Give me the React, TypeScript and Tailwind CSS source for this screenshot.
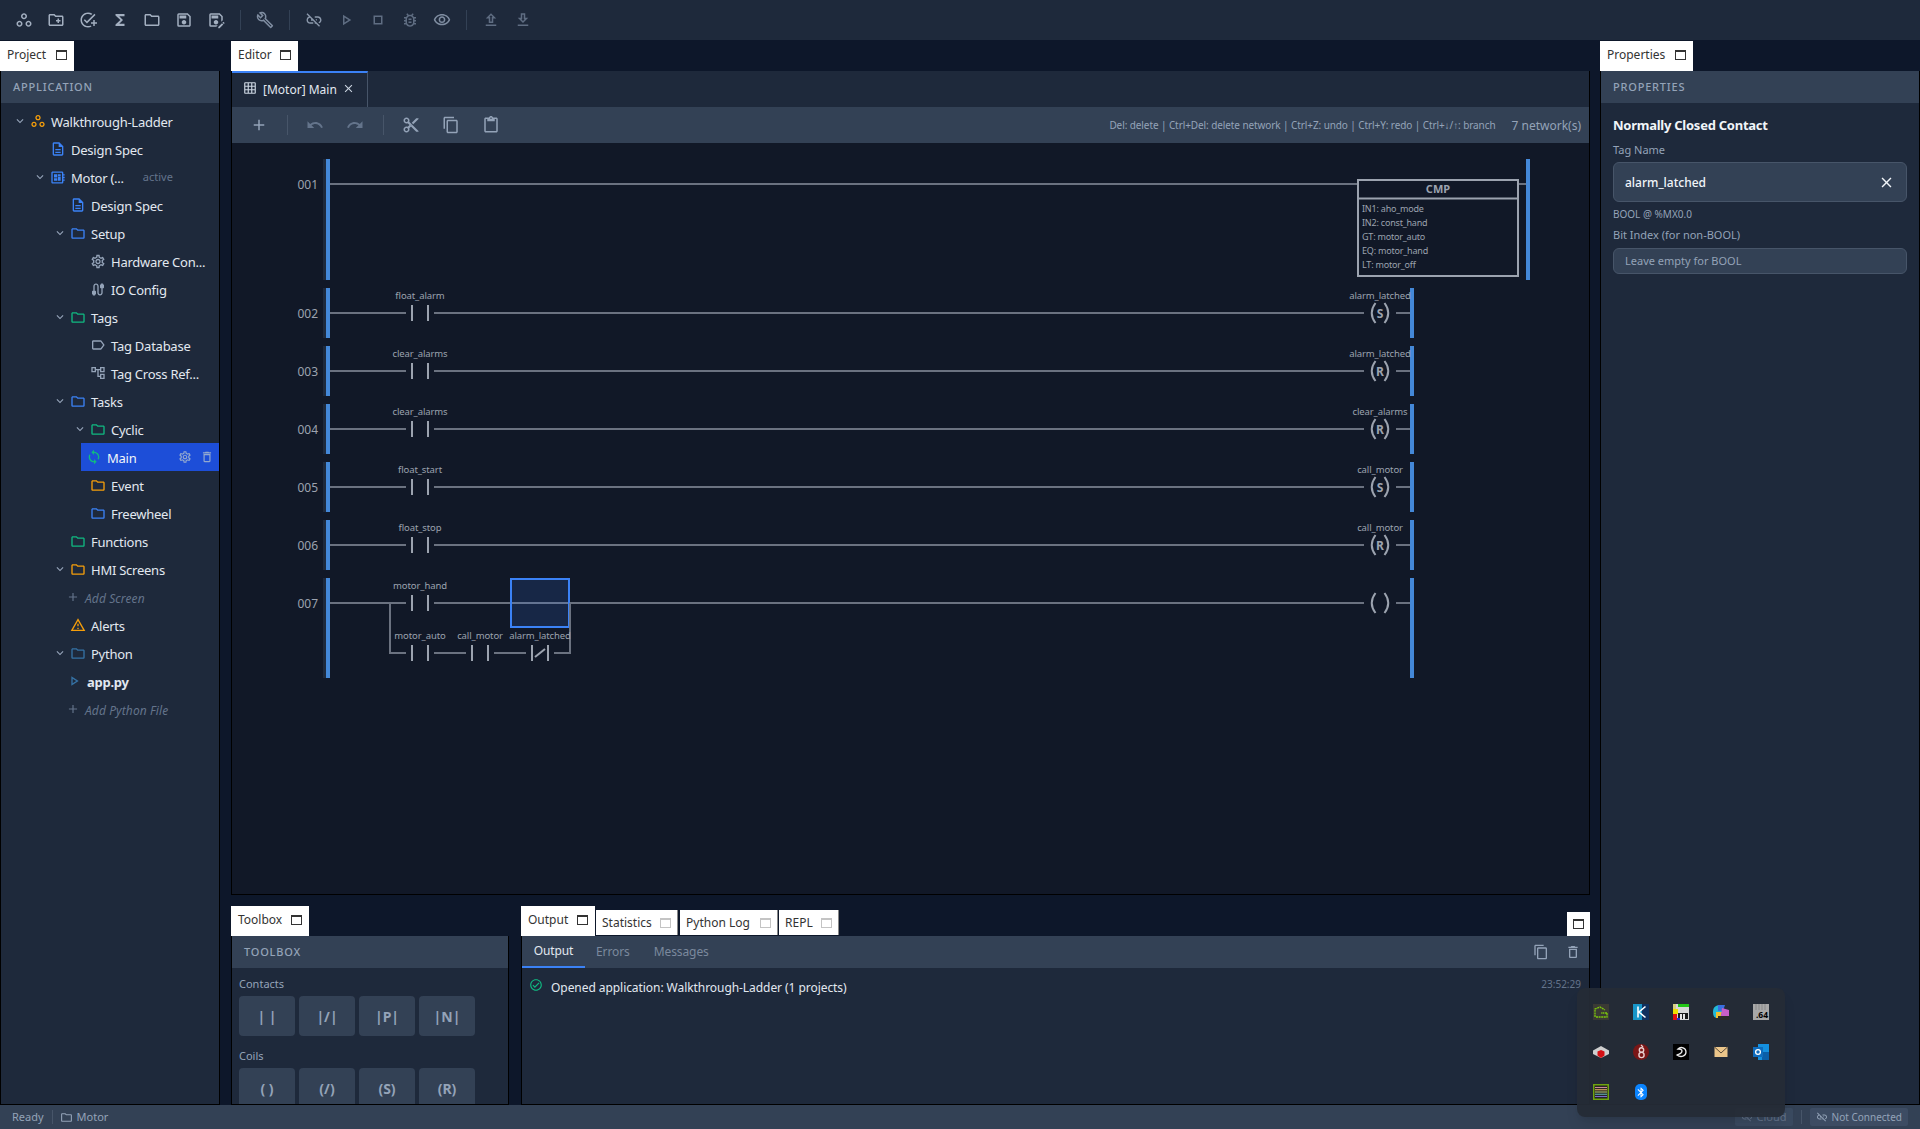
import type { ReactNode } from "react";
import {
  MdAdd,
  MdBluetooth,
  MdClose,
  MdExpandMore,
  MdFunctions,
  MdGridOn,
  MdLinkOff,
  MdOutlineAccountTree,
  MdOutlineAddTask,
  MdOutlineBugReport,
  MdOutlineBuild,
  MdOutlineCable,
  MdOutlineCheckCircle,
  MdOutlineContentCopy,
  MdOutlineContentCut,
  MdOutlineContentPaste,
  MdOutlineCreateNewFolder,
  MdOutlineDelete,
  MdOutlineDescription,
  MdOutlineDeveloperBoard,
  MdOutlineDownload,
  MdOutlineFolder,
  MdOutlineLabel,
  MdOutlinePlayArrow,
  MdOutlineSave,
  MdOutlineSaveAs,
  MdOutlineSettings,
  MdOutlineStop,
  MdOutlineSync,
  MdOutlineUpload,
  MdOutlineVisibility,
  MdOutlineWarningAmber,
  MdOutlineWorkspaces,
  MdRedo,
  MdUndo,
} from "react-icons/md";

const BLUE = "#3b82f6";
const GREEN = "#10b981";
const AMBER = "#f59e0b";
const GRAY = "#94a3b8";
const WIRE = "#6b7280";
const INK = "#9ca3af";
const RAIL = "#4488d8";

function MaxBox({ dim }: { dim?: boolean }) {
  return <span className={`block h-[10px] w-[11px] shrink-0 border border-t-2 ${dim ? "border-[#c4c4c4]" : "border-[#333333]"}`} />;
}

function DockTab({ label, className }: { label: string; className: string }) {
  return (
    <div className={`flex h-[30px] items-center justify-between bg-white pb-[2px] pl-[7px] pr-[7px] text-[12px] text-[#333333] ${className}`}>
      <span>{label}</span>
      <MaxBox />
    </div>
  );
}

function InactiveTab({ label, className }: { label: string; className: string }) {
  return (
    <div className={`mt-1 flex h-[25px] items-center justify-between border-r border-[#888888] bg-white pl-[6px] pr-[6px] text-[12px] text-[#333333] ${className}`}>
      <span>{label}</span>
      <MaxBox dim />
    </div>
  );
}

function PanelHeader({ title }: { title: string }) {
  return (
    <div className="flex h-[32px] shrink-0 items-center bg-[#334155] pl-[12px] text-[11px] font-medium tracking-[0.8px] text-[#94a3b8]">
      {title}
    </div>
  );
}

function TopBar() {
  const on = "text-[#a3afc0]";
  const off = "text-[#5f6d82]";
  const Btn = ({ children }: { children: ReactNode }) => <span className="flex h-[32px] w-[32px] items-center justify-center">{children}</span>;
  const Sep = () => <span className="mx-[8px] h-[20px] w-px bg-[#334155]" />;
  return (
    <div className="flex h-[40px] shrink-0 items-center bg-[#1e293b] pl-[8px]">
      <div className={`flex items-center ${on}`}>
        <Btn><MdOutlineWorkspaces size={18} /></Btn>
        <Btn><MdOutlineCreateNewFolder size={18} /></Btn>
        <Btn><MdOutlineAddTask size={18} /></Btn>
        <Btn><MdFunctions size={18} /></Btn>
        <Btn><MdOutlineFolder size={18} /></Btn>
        <Btn><MdOutlineSave size={18} /></Btn>
        <Btn><MdOutlineSaveAs size={18} /></Btn>
      </div>
      <Sep />
      <div className="flex items-center text-[#7f8da1]">
        <Btn><MdOutlineBuild size={18} /></Btn>
      </div>
      <Sep />
      <div className={`flex items-center ${off}`}>
        <Btn><span className="text-[#8b98ab]"><MdLinkOff size={18} /></span></Btn>
        <Btn><MdOutlinePlayArrow size={18} /></Btn>
        <Btn><MdOutlineStop size={18} /></Btn>
        <Btn><MdOutlineBugReport size={18} /></Btn>
        <Btn><span className="text-[#7f8da1]"><MdOutlineVisibility size={18} /></span></Btn>
      </div>
      <Sep />
      <div className={`flex items-center ${off}`}>
        <Btn><MdOutlineUpload size={18} /></Btn>
        <Btn><MdOutlineDownload size={18} /></Btn>
      </div>
    </div>
  );
}

type TreeRow = {
  label: string;
  pad: string;
  icon: ReactNode;
  chevron?: boolean;
  note?: string;
  bold?: boolean;
};

const folder = (color: string) => <MdOutlineFolder size={17} color={color} />;

const rows: TreeRow[] = [
  { label: "Walkthrough-Ladder", pad: "pl-[12px]", chevron: true, icon: <MdOutlineWorkspaces size={16} color={AMBER} /> },
  { label: "Design Spec", pad: "pl-[32px]", icon: <MdOutlineDescription size={16} color={BLUE} /> },
  { label: "Motor (...", pad: "pl-[32px]", chevron: true, note: "active", icon: <MdOutlineDeveloperBoard size={17} color={BLUE} /> },
  { label: "Design Spec", pad: "pl-[52px]", icon: <MdOutlineDescription size={16} color={BLUE} /> },
  { label: "Setup", pad: "pl-[52px]", chevron: true, icon: folder(BLUE) },
  { label: "Hardware Con...", pad: "pl-[72px]", icon: <MdOutlineSettings size={17} color={GRAY} /> },
  { label: "IO Config", pad: "pl-[72px]", icon: <MdOutlineCable size={17} color={GRAY} /> },
  { label: "Tags", pad: "pl-[52px]", chevron: true, icon: folder(GREEN) },
  { label: "Tag Database", pad: "pl-[72px]", icon: <MdOutlineLabel size={16} color={GRAY} /> },
  { label: "Tag Cross Ref...", pad: "pl-[72px]", icon: <MdOutlineAccountTree size={16} color={GRAY} /> },
  { label: "Tasks", pad: "pl-[52px]", chevron: true, icon: folder(BLUE) },
  { label: "Cyclic", pad: "pl-[72px]", chevron: true, icon: folder(GREEN) },
];

const rowsAfterMain: TreeRow[] = [
  { label: "Event", pad: "pl-[72px]", icon: folder(AMBER) },
  { label: "Freewheel", pad: "pl-[72px]", icon: folder(BLUE) },
  { label: "Functions", pad: "pl-[52px]", icon: folder(GREEN) },
  { label: "HMI Screens", pad: "pl-[52px]", chevron: true, icon: folder(AMBER) },
];

function Row({ row }: { row: TreeRow }) {
  return (
    <div className={`flex h-[28px] items-center text-[13px] tracking-[-0.25px] text-[#e2e8f0] ${row.pad}`}>
      <span className="flex w-[14px] shrink-0 justify-center">
        {row.chevron && <MdExpandMore size={14} color={GRAY} />}
      </span>
      <span className="ml-[3px] flex w-[16px] shrink-0 justify-center">{row.icon}</span>
      <span className="ml-[5px] translate-y-[2px] whitespace-nowrap">{row.label}</span>
      {row.note && <span className="ml-[19px] text-[11px] tracking-normal text-[#64748b]">{row.note}</span>}
    </div>
  );
}

function AddRow({ label }: { label: string }) {
  return (
    <div className="flex h-[28px] items-center pl-[65px] text-[12px] italic tracking-[0.1px] text-[#64748b]">
      <MdAdd size={14} />
      <span className="ml-[5px] translate-y-[2px]">{label}</span>
    </div>
  );
}

function ProjectPanel() {
  return (
    <div className="flex w-[220px] shrink-0 flex-col">
      <DockTab label="Project" className="w-[74px]" />
      <div className="flex min-h-0 flex-1 flex-col border border-t-0 border-black bg-[#1e293b]">
        <PanelHeader title="APPLICATION" />
        <div className="pt-[4px]">
          {rows.map((row, i) => (
            <Row key={i} row={row} />
          ))}
          <div className="ml-[80px] flex h-[28px] items-center bg-[#1d4ed8] pl-[5px] text-[13px] tracking-[-0.25px] text-[#f1f5f9]">
            <MdOutlineSync size={16} color={GREEN} className="shrink-0" />
            <span className="ml-[5px] flex-1 translate-y-[2px]">Main</span>
            <MdOutlineSettings size={14} color="#93a9cf" className="mr-[8px]" />
            <MdOutlineDelete size={14} color="#93a9cf" className="mr-[5px]" />
          </div>
          {rowsAfterMain.map((row, i) => (
            <Row key={i} row={row} />
          ))}
          <AddRow label="Add Screen" />
          <Row row={{ label: "Alerts", pad: "pl-[52px]", icon: <MdOutlineWarningAmber size={18} color={AMBER} /> }} />
          <Row row={{ label: "Python", pad: "pl-[52px]", chevron: true, icon: folder("#3572a5") }} />
          <div className="flex h-[28px] items-center pl-[65px] text-[13px] font-bold tracking-[-0.25px] text-[#e2e8f0]">
            <MdOutlinePlayArrow size={16} color="#3572a5" className="shrink-0" />
            <span className="ml-[5px] translate-y-[2px]">app.py</span>
          </div>
          <AddRow label="Add Python File" />
        </div>
      </div>
    </div>
  );
}

function Contact({ x, y, tag, closed }: { x: number; y: number; tag: string; closed?: boolean }) {
  return (
    <g>
      <text x={x} y={y - 14} textAnchor="middle" fontSize={9.5} letterSpacing={-0.1} fill={INK}>{tag}</text>
      <line x1={x - 8} x2={x - 8} y1={y - 8} y2={y + 8} stroke={INK} strokeWidth={2} />
      <line x1={x + 8} x2={x + 8} y1={y - 8} y2={y + 8} stroke={INK} strokeWidth={2} />
      {closed && <line x1={x - 5} x2={x + 5} y1={y + 4} y2={y - 4} stroke={INK} strokeWidth={2} />}
    </g>
  );
}

function Coil({ y, tag, letter }: { y: number; tag?: string; letter?: string }) {
  return (
    <g>
      {tag && <text x={1380} y={y - 14} textAnchor="middle" fontSize={9.5} letterSpacing={-0.1} fill={INK}>{tag}</text>}
      <path d={`M1375.5 ${y - 10} Q1368 ${y} 1375.5 ${y + 10}`} fill="none" stroke={INK} strokeWidth={2} />
      <path d={`M1384.5 ${y - 10} Q1392 ${y} 1384.5 ${y + 10}`} fill="none" stroke={INK} strokeWidth={2} />
      {letter && <text x={1380} y={y + 4.5} textAnchor="middle" fontSize={12} fontWeight={700} fill={INK}>{letter}</text>}
    </g>
  );
}

function Wire({ x1, x2, y }: { x1: number; x2: number; y: number }) {
  return <line x1={x1} x2={x2} y1={y} y2={y} stroke={WIRE} strokeWidth={2} />;
}

function Network({ num, h, rungY, endX, children }: { num: string; h: number; rungY: number; endX: number; children: ReactNode }) {
  return (
    <svg width={1357} height={h} viewBox={`232 0 1357 ${h}`} className="block shrink-0">
      <text x={318} y={rungY + 5} textAnchor="end" fontSize={12} fill={INK}>{num}</text>
      <rect x={323} y={0} width={3} height={h} fill="#1e293b" />
      <rect x={326} y={0} width={4} height={h} fill={RAIL} />
      <rect x={endX} y={0} width={4} height={h} fill={RAIL} />
      {children}
    </svg>
  );
}

const simpleNets = [
  { num: "002", tag: "float_alarm", coil: "alarm_latched", letter: "S" },
  { num: "003", tag: "clear_alarms", coil: "alarm_latched", letter: "R" },
  { num: "004", tag: "clear_alarms", coil: "clear_alarms", letter: "R" },
  { num: "005", tag: "float_start", coil: "call_motor", letter: "S" },
  { num: "006", tag: "float_stop", coil: "call_motor", letter: "R" },
];

function Ladder() {
  return (
    <div className="flex min-h-0 flex-1 flex-col gap-[8px] overflow-hidden bg-[#111827] pt-[16px]">
      <Network num="001" h={121} rungY={25} endX={1526}>
        <Wire x1={330} x2={1358} y={25} />
        <Wire x1={1518} x2={1526} y={25} />
        <rect x={1358} y={21} width={160} height={96} fill="none" stroke={INK} strokeWidth={2} />
        <line x1={1358} x2={1518} y1={39.5} y2={39.5} stroke={INK} strokeWidth={2} />
        <text x={1438} y={34} textAnchor="middle" fontSize={11} fontWeight={700} fill={INK}>CMP</text>
        {["IN1: aho_mode", "IN2: const_hand", "GT: motor_auto", "EQ: motor_hand", "LT: motor_off"].map((t, i) => (
          <text key={t} x={1362} y={53 + i * 14} fontSize={9} letterSpacing={-0.2} fill={INK}>{t}</text>
        ))}
      </Network>
      {simpleNets.map((n) => (
        <Network key={n.num} num={n.num} h={50} rungY={25} endX={1410}>
          <Wire x1={330} x2={406} y={25} />
          <Wire x1={434} x2={1364} y={25} />
          <Wire x1={1396} x2={1410} y={25} />
          <Contact x={420} y={25} tag={n.tag} />
          <Coil y={25} tag={n.coil} letter={n.letter} />
        </Network>
      ))}
      <Network num="007" h={100} rungY={25} endX={1410}>
        <Wire x1={330} x2={406} y={25} />
        <Wire x1={434} x2={1364} y={25} />
        <Wire x1={1396} x2={1410} y={25} />
        <Contact x={420} y={25} tag="motor_hand" />
        <rect x={511} y={1} width={58} height={48} fill={BLUE} fillOpacity={0.15} stroke={BLUE} strokeWidth={2} />
        <path d="M390 25V75H406" fill="none" stroke={WIRE} strokeWidth={2} />
        <Wire x1={434} x2={466} y={75} />
        <Wire x1={494} x2={526} y={75} />
        <path d="M554 75H570V25" fill="none" stroke={WIRE} strokeWidth={2} />
        <Contact x={420} y={75} tag="motor_auto" />
        <Contact x={480} y={75} tag="call_motor" />
        <Contact x={540} y={75} tag="alarm_latched" closed />
        <Coil y={25} />
      </Network>
    </div>
  );
}

function EditorPanel() {
  const Sep = () => <span className="block h-[20px] w-px shrink-0 bg-[#475569]" />;
  return (
    <div className="flex min-h-0 flex-1 flex-col">
      <DockTab label="Editor" className="w-[67px]" />
      <div className="flex min-h-0 flex-1 flex-col border border-t-0 border-black">
        <div className="flex h-[36px] shrink-0 bg-[#1e293b]">
          <div className="flex w-[136px] items-center border-r border-t-2 border-r-[#475569] border-t-[#3b82f6] text-[12px] text-[#e2e8f0]">
            <MdGridOn size={14} className="ml-[11px] -translate-y-[2px] text-[#cbd5e1]" />
            <span className="ml-[6px]">[Motor] Main</span>
            <MdClose size={13} className="ml-[5px] -translate-y-[2px] text-[#cbd5e1]" />
          </div>
        </div>
        <div className="flex h-[36px] shrink-0 items-center bg-[#334155] text-[#64748b]">
          <MdAdd size={18} className="ml-[18px] text-[#94a3b8]" />
          <span className="ml-[19px]"><Sep /></span>
          <MdUndo size={18} className="ml-[18px]" />
          <MdRedo size={18} className="ml-[22px]" />
          <span className="ml-[19px]"><Sep /></span>
          <MdOutlineContentCut size={18} className="ml-[18px] text-[#94a3b8]" />
          <MdOutlineContentCopy size={18} className="ml-[22px] text-[#94a3b8]" />
          <MdOutlineContentPaste size={18} className="ml-[22px] text-[#94a3b8]" />
          <span className="ml-auto text-[10px] tracking-[-0.09px] text-[#94a3b8]">
            Del: delete | Ctrl+Del: delete network | Ctrl+Z: undo | Ctrl+Y: redo | Ctrl+↓/↑: branch
          </span>
          <span className="ml-[16px] mr-[8px] translate-y-px text-[12px] text-[#94a3b8]">7 network(s)</span>
        </div>
        <Ladder />
      </div>
    </div>
  );
}

function ToolButton({ label }: { label: string }) {
  return (
    <div className="flex h-[40px] w-[56px] items-center justify-center rounded-[4px] bg-[#334155] text-[14px] font-bold text-[#94a3b8]">
      {label}
    </div>
  );
}

function ToolboxPanel() {
  return (
    <div className="flex w-[278px] shrink-0 flex-col">
      <DockTab label="Toolbox" className="w-[78px]" />
      <div className="flex min-h-0 flex-1 flex-col overflow-hidden border border-t-0 border-black bg-[#1e293b]">
        <PanelHeader title="TOOLBOX" />
        <div className="px-[7px]">
          <p className="mt-[8px] h-[20px] text-[11px] leading-[16px] text-[#94a3b8]">Contacts</p>
          <div className="flex gap-[4px]">
            {["| |", "|/|", "|P|", "|N|"].map((l) => <ToolButton key={l} label={l} />)}
          </div>
          <p className="mt-[12px] h-[20px] text-[11px] leading-[16px] text-[#94a3b8]">Coils</p>
          <div className="flex gap-[4px]">
            {["( )", "(/)", "(S)", "(R)"].map((l) => <ToolButton key={l} label={l} />)}
          </div>
        </div>
      </div>
    </div>
  );
}

function OutputPanel() {
  return (
    <div className="flex min-w-0 flex-1 flex-col">
      <div className="flex h-[30px] items-start">
        <DockTab label="Output" className="w-[74px]" />
        <InactiveTab label="Statistics" className="ml-px w-[82px]" />
        <InactiveTab label="Python Log" className="ml-[2px] w-[98px]" />
        <InactiveTab label="REPL" className="ml-px w-[60px]" />
        <div className="ml-auto mt-[6px] flex h-[24px] w-[23px] items-center justify-center bg-white">
          <MaxBox />
        </div>
      </div>
      <div className="flex min-h-0 flex-1 flex-col border border-t-0 border-black bg-[#1e293b]">
        <div className="flex h-[32px] shrink-0 items-center bg-[#334155] pr-[8px] text-[12px] tracking-[-0.1px] text-[#7b899d]">
          <span className="flex h-full w-[63px] items-center justify-center border-b-2 border-[#3b82f6] text-[#e2e8f0]">Output</span>
          <span className="ml-[11px]">Errors</span>
          <span className="ml-[24px]">Messages</span>
          <MdOutlineContentCopy size={16} className="ml-auto mr-[16px] text-[#94a3b8]" />
          <MdOutlineDelete size={16} className="text-[#94a3b8]" />
        </div>
        <div className="flex items-start px-[8px] pt-[9px] text-[12px] text-[#e2e8f0]">
          <MdOutlineCheckCircle size={14} color={GREEN} className="ml-[-1px] mt-[1px] shrink-0" />
          <span className="ml-[8px] mt-[2px] tracking-[-0.06px]">Opened application: Walkthrough-Ladder (1 projects)</span>
          <span className="ml-auto text-[10px] text-[#64748b]">23:52:29</span>
        </div>
      </div>
    </div>
  );
}

function PropertiesPanel() {
  return (
    <div className="flex w-[320px] shrink-0 flex-col">
      <DockTab label="Properties" className="w-[93px]" />
      <div className="flex min-h-0 flex-1 flex-col border border-t-0 border-black bg-[#1e293b]">
        <PanelHeader title="PROPERTIES" />
        <div className="px-[12px] pt-[13px]">
          <h2 className="text-[13px] font-bold leading-[18px] tracking-[-0.25px] text-[#f1f5f9]">Normally Closed Contact</h2>
          <p className="mt-[8px] text-[11px] leading-[16px] text-[#94a3b8]">Tag Name</p>
          <div className="mt-[4px] flex h-[40px] items-center justify-between rounded-[6px] border border-[#475569] bg-[#334155] px-[11px] text-[12px] font-medium text-[#f1f5f9]">
            <span className="translate-y-px">alarm_latched</span>
            <MdClose size={17} />
          </div>
          <p className="mt-[4px] text-[10px] leading-[16px] text-[#94a3b8]">BOOL @ %MX0.0</p>
          <p className="mt-[5px] text-[11px] leading-[16px] text-[#94a3b8]">Bit Index (for non-BOOL)</p>
          <div className="mt-[5px] flex h-[26px] items-center rounded-[6px] border border-[#475569] bg-[#334155] px-[11px] text-[11px] text-[#94a3b8]">
            Leave empty for BOOL
          </div>
        </div>
      </div>
    </div>
  );
}

function StatusBar() {
  return (
    <div className="flex h-[24px] shrink-0 items-center bg-[#334155] text-[11px] text-[#94a3b8]">
      <span className="ml-[12px]">Ready</span>
      <span className="ml-[8px] h-[14px] w-px bg-[#475569]" />
      <MdOutlineFolder size={13} className="ml-[7px]" />
      <span className="ml-[4px]">Motor</span>
      <div className="ml-auto flex h-[18px] items-center gap-[4px] rounded-[2px] bg-[#3a4a60] px-[6px] text-[#64748b]">
        <MdLinkOff size={12} />
        <span>Cloud</span>
      </div>
      <span className="mx-[8px] h-[14px] w-px bg-[#475569]" />
      <div className="mr-[12px] flex h-[18px] items-center gap-[4px] rounded-[2px] bg-[#3d4c63] px-[6px] text-[10px]">
        <MdLinkOff size={12} />
        <span>Not Connected</span>
      </div>
    </div>
  );
}

function TrayIcon({ children }: { children: ReactNode }) {
  return (
    <div className="flex h-[40px] w-[40px] items-center justify-center">
      <svg width={16} height={16} viewBox="0 0 16 16">{children}</svg>
    </div>
  );
}

function TrayPopup() {
  return (
    <div className="absolute left-[1577px] top-[988px] z-10 grid h-[129px] w-[208px] grid-cols-5 content-start rounded-[8px] bg-[#252b36]/95 p-[4px] shadow-lg">
      <TrayIcon>
        <rect width="16" height="16" fill="#3a3a34" />
        <path d="M2 13V5L7 3L12 6M14 9H8M14 9V13H3" fill="none" stroke="#7ac70c" strokeWidth="1.3" strokeDasharray="2 0.6" />
      </TrayIcon>
      <TrayIcon>
        <rect width="16" height="16" fill="#10305e" />
        <rect width="9" height="16" fill="#1896c8" />
        <path d="M5 2.5V13.5M12.5 2.5L6 8L12.5 13.5" fill="none" stroke="#ffffff" strokeWidth="1.6" />
      </TrayIcon>
      <TrayIcon>
        <rect width="16" height="16" fill="#d8d8d8" />
        <rect x="5" width="11" height="3" fill="#22c616" />
        <rect y="0" width="3" height="5" fill="#d8d080" />
        <rect y="5" width="5" height="5" fill="#f0e000" />
        <rect y="10" width="4" height="6" fill="#e01010" />
        <rect x="5" y="9" width="10" height="6" fill="#1a1a1a" />
        <rect x="7" y="10" width="2" height="5" fill="#e8e8e8" />
        <rect x="10" y="10" width="2" height="5" fill="#e8e8e8" />
        <rect x="4" y="14" width="3" height="2" fill="#2030d0" />
      </TrayIcon>
      <TrayIcon>
        <path d="M0 8C0 3 3 1 7 1H10L8 14H4C1 14 0 11 0 8Z" fill="#22b8d8" />
        <path d="M5 1H12L10 7H5Z" fill="#3a6fe0" />
        <path d="M3 8H9L7 14H3Z" fill="#f0c030" />
        <path d="M9 4L16 6V12L8 12Z" fill="#c85fc8" />
        <rect x="5" y="12" width="11" height="4" fill="#2a2a2a" />
      </TrayIcon>
      <TrayIcon>
        <rect width="16" height="16" fill="#a8a8a8" />
        <path d="M3 0V6M6 0V6M9 0V6M12 0V6" stroke="#8a8a8a" />
        <text x="9" y="14" textAnchor="middle" fontSize="8.5" fontWeight="700" fill="#000000">.64</text>
      </TrayIcon>
      <TrayIcon>
        <path d="M8 2L16 6.5V10L8 14L0 10V6.5Z" fill="#cfcfcf" />
        <path d="M4.5 7.5L8 6L11.5 7.5V11.5L8 14L4.5 11.5Z" fill="#d40f14" />
      </TrayIcon>
      <TrayIcon>
        <circle cx="8" cy="8" r="8" fill="#7a1616" />
        <circle cx="8.5" cy="6" r="2.2" fill="none" stroke="#e8d0d0" strokeWidth="1.4" />
        <circle cx="8.5" cy="11" r="2.6" fill="none" stroke="#e8d0d0" strokeWidth="1.4" />
        <path d="M8 1L10 3" stroke="#e8d0d0" strokeWidth="1.2" />
      </TrayIcon>
      <TrayIcon>
        <rect width="16" height="16" fill="#000000" />
        <path d="M5 5C8 2 13 4 13 8C13 12 8 14 4 11C6 10 9 10 9 7C9 5 7 5 5 5Z" fill="none" stroke="#e8e8e8" strokeWidth="1.3" />
      </TrayIcon>
      <TrayIcon>
        <rect x="1.5" y="3" width="13" height="10" fill="#ecc68a" />
        <path d="M1.5 3L8 9L14.5 3" fill="none" stroke="#5a4a38" strokeWidth="1" />
      </TrayIcon>
      <TrayIcon>
        <rect x="5" y="0" width="11" height="16" fill="#1490df" />
        <rect x="9" y="8" width="7" height="8" fill="#0a5ea8" />
        <rect y="3" width="10" height="10" fill="#0f6cbd" />
        <circle cx="5" cy="8" r="2.4" fill="none" stroke="#ffffff" strokeWidth="1.3" />
      </TrayIcon>
      <TrayIcon>
        <rect x="0.75" y="0.75" width="14.5" height="14.5" fill="#1a1a1a" stroke="#6fa30f" strokeWidth="1.5" />
        <path d="M2 3.5H14" stroke="#c98a9a" strokeWidth="1.2" />
        <path d="M2 5.75H14" stroke="#d8a860" strokeWidth="1.2" />
        <path d="M2 8H14" stroke="#a8b870" strokeWidth="1.2" />
        <path d="M2 10.25H14" stroke="#60a8a8" strokeWidth="1.2" />
        <path d="M2 12.5H14" stroke="#7c70c8" strokeWidth="1.2" />
      </TrayIcon>
      <div className="flex h-[40px] w-[40px] items-center justify-center">
        <span className="flex h-[16px] w-[12px] items-center justify-center rounded-[5px] bg-[#0a84ff] text-white">
          <MdBluetooth size={13} />
        </span>
      </div>
    </div>
  );
}

export default function App() {
  return (
    <div className="relative flex h-screen w-full flex-col overflow-hidden bg-[#0d172a] font-['Noto_Sans',sans-serif]">
      <TopBar />
      <div className="flex min-h-0 flex-1 pt-px">
        <ProjectPanel />
        <div className="ml-[11px] flex w-[1359px] shrink-0 flex-col">
          <EditorPanel />
          <div className="mt-[11px] flex h-[199px] shrink-0">
            <ToolboxPanel />
            <div className="w-[12px] shrink-0" />
            <OutputPanel />
          </div>
        </div>
        <div className="ml-[10px] flex">
          <PropertiesPanel />
        </div>
      </div>
      <StatusBar />
      <TrayPopup />
    </div>
  );
}
